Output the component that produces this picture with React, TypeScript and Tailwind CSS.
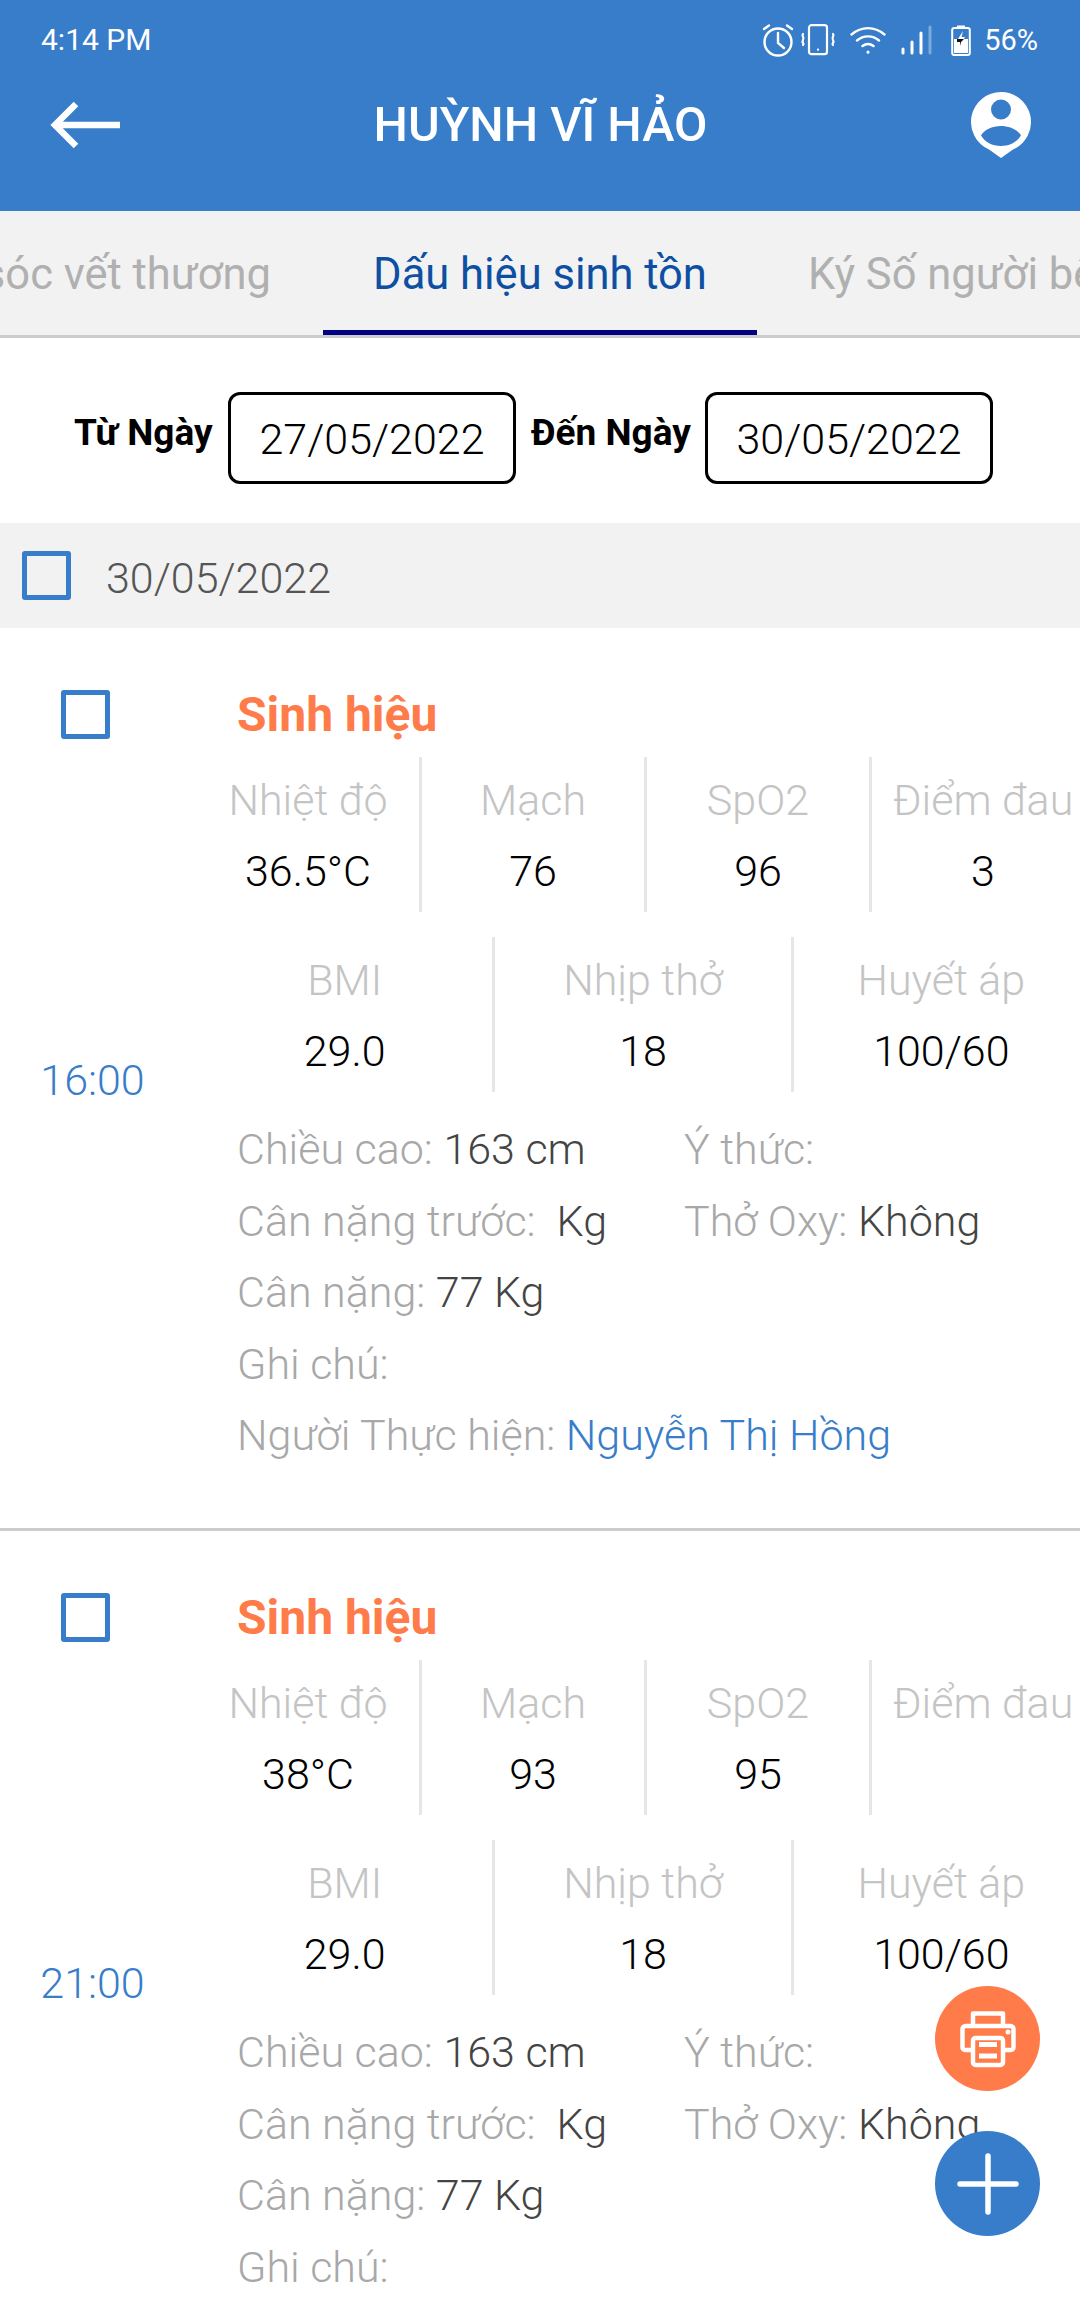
import React from 'react';

const Checkbox = () => <div className="w-[49px] h-[49px] rounded-[3px] border-[5px] border-[#377dc9] shrink-0" />;

const Stat = ({ label, value, last }: { label: string; value: string; last?: boolean }) => (
  <div className={`flex-1 h-[155px] flex flex-col items-center pt-[19px] ${last ? '' : 'border-r-[3px] border-[#e6e6e6]'}`}>
    <div className="text-[43px] leading-[48px] font-light text-[#c4c4c4] whitespace-nowrap">{label}</div>
    <div className="mt-[23px] text-[43px] leading-[48px] font-light text-black whitespace-nowrap">{value}</div>
  </div>
);

const Info = ({ label, value, blue }: { label: string; value?: string; blue?: boolean }) => (
  <div className="h-[71.5px] text-[43px] leading-[71px] font-light text-[#a8a8a8] whitespace-pre">
    {label} <span className={blue ? 'text-[#377dc9]' : 'text-[#444444]'}>{value}</span>
  </div>
);

const Record = ({ time, temp, pulse, spo2, pain }: { time: string; temp: string; pulse: string; spo2: string; pain: string }) => (
  <div className="h-[903px] shrink-0 border-b-[3px] border-[#cccccc] flex">
    <div className="w-[197px] shrink-0 flex flex-col pt-[62px]">
      <div className="ml-[61px]">
        <Checkbox />
      </div>
      <div className="mt-[317px] w-[185px] text-center text-[43px] leading-[48px] font-light text-[#377dc9]">{time}</div>
    </div>
    <div className="w-[897px] shrink-0">
      <div className="pl-[40px] pt-[60px] h-[129px] text-[48px] leading-[54px] font-bold text-[#ff7b4a]">Sinh hiệu</div>
      <div className="flex">
        <Stat label="Nhiệt độ" value={temp} />
        <Stat label="Mạch" value={pulse} />
        <Stat label="SpO2" value={spo2} />
        <Stat label="Điểm đau" value={pain} last />
      </div>
      <div className="flex mt-[25px] w-[892px]">
        <Stat label="BMI" value="29.0" />
        <Stat label="Nhịp thở" value="18" />
        <Stat label="Huyết áp" value="100/60" last />
      </div>
      <div className="flex pl-[40px] mt-[22px]">
        <div className="w-[447px]">
          <Info label="Chiều cao:" value="163 cm" />
          <Info label="Cân nặng trước:" value={' Kg'} />
        </div>
        <div>
          <Info label="Ý thức:" />
          <Info label="Thở Oxy:" value="Không" />
        </div>
      </div>
      <div className="pl-[40px]">
        <Info label="Cân nặng:" value="77 Kg" />
        <Info label="Ghi chú:" />
        <Info label="Người Thực hiện:" value="Nguyễn Thị Hồng" blue />
      </div>
    </div>
  </div>
);

const StatusIcons = () => (
  <div className="flex items-center text-white">
    <svg width="32" height="34" viewBox="0 0 32 34" fill="none" stroke="currentColor" strokeWidth="2.4" strokeLinecap="round" className="mr-[6px]">
      <circle cx="16" cy="19" r="13.5" />
      <path d="M16 10v10l6 5M2 6l5-3.5M30 6l-5-3.5" />
    </svg>
    <svg width="36" height="32" viewBox="0 0 36 32" fill="none" stroke="currentColor" strokeWidth="2.2" strokeLinecap="round" className="mr-[14px]">
      <rect x="9" y="1.2" width="18" height="29" rx="2.5" />
      <path d="M18 25.5v.2M3 10c-2 2 2 3 0 6s2 3 0 5M33 10c2 2-2 3 0 6s-2 3 0 5" />
    </svg>
    <svg width="36" height="28" viewBox="0 0 36 28" fill="none" stroke="currentColor" strokeWidth="2.4" strokeLinecap="round" className="mr-[15px]">
      <path d="M1.5 8.5c10-8.5 23-8.5 33 0M7 14.5c6.500-5.500 15.500-5.500 22 0M12.500 20c3.300-2.500 7.700-2.500 11 0" />
      <path d="M18 26v.2" strokeWidth="3" />
    </svg>
    <svg width="31" height="30" viewBox="0 0 31 30" fill="none" strokeWidth="3" strokeLinecap="round" className="mr-[19px]">
      <path d="M2 28v-4M11 28v-11M20 28V8" stroke="#ffffff" />
      <path d="M29 28V2" stroke="#ffffff" strokeOpacity="0.35" />
    </svg>
    <svg width="20" height="31" viewBox="0 0 20 31" className="mr-[13px]">
      <rect x="1.200" y="3" width="17.600" height="27" rx="2" fill="none" stroke="#ffffff" strokeWidth="2" />
      <rect x="6" y="0.500" width="8" height="2.500" fill="#ffffff" />
      <rect x="3" y="14" width="14" height="14" fill="#ffffff" />
      <path d="M12 6l-5 8h3.500l-1.500 6 5-8h-3.500z" fill="#ffffff" />
      <path d="M6 14h7l-3 3v4l-1-4H6z" fill="#111111" />
    </svg>
    <span className="text-[29px] leading-[34px] text-white">56%</span>
  </div>
);

export default function App() {
  return (
    <div className="relative w-[1080px] h-[2301px] overflow-hidden bg-white flex flex-col font-['Roboto',sans-serif]">
      <header className="h-[211px] shrink-0 bg-[#377dc9]">
        <div className="h-[78px] flex items-center justify-between pl-[41px] pr-[42px] pt-[2px]">
          <span className="text-[30px] leading-[34px] font-normal text-white">4:14 PM</span>
          <StatusIcons />
        </div>
        <div className="h-[94px] flex items-center pl-[49px] pr-[48px]">
          <div className="w-[72px] shrink-0">
            <svg width="72" height="48" viewBox="0 0 72 48" fill="none" stroke="#ffffff" strokeWidth="6.500">
              <path d="M71 24H6M27 3L6 24l21 21" />
            </svg>
          </div>
          <div className="flex-1 text-center text-[48.500px] leading-[54px] font-medium text-white whitespace-nowrap">HUỲNH VĨ HẢO</div>
          <div className="w-[72px] shrink-0 flex justify-end">
            <svg width="62" height="68" viewBox="0 0 62 68" fill="#ffffff">
              <path fillRule="evenodd" d="M31 1a30 30 0 0 1 12 57.500L31 67 19 58.500A30 30 0 0 1 31 1zM31 8.500a10 10 0 1 0 0 20 10 10 0 0 0 0-20zM31 35c-9 0-17 4-20 9.500C15 51 22 55 31 55s16-4 20-10.500C48 39 40 35 31 35z" />
            </svg>
          </div>
        </div>
      </header>

      <nav className="h-[127px] shrink-0 bg-[#f2f2f2] border-b-[3px] border-[#cccccc] relative overflow-hidden">
        <div className="flex absolute left-[-188px] top-0 h-[124px] w-[1500px] text-[43.500px] font-normal">
          <div className="w-[511px] h-full text-right pr-[52px] pt-[39px] leading-[50px] text-[#b0b0b0] whitespace-nowrap">Chăm sóc vết thương</div>
          <div className="w-[434px] h-full border-b-[5px] border-[#000080] text-center pt-[39px] leading-[50px] text-[#0d4fa3] whitespace-nowrap">Dấu hiệu sinh tồn</div>
          <div className="pl-[51px] pt-[39px] leading-[50px] text-[#b0b0b0] whitespace-nowrap">Ký Số người bệnh</div>
        </div>
      </nav>

      <div className="h-[185px] shrink-0 flex items-center pl-[74px] pt-[14px]">
        <div className="text-[37px] leading-[44px] font-bold text-black mb-[9px] w-[154px] whitespace-nowrap">Từ Ngày</div>
        <div className="w-[288px] h-[92px] pt-[3px] rounded-[12px] border-[3px] border-black flex items-center justify-center text-[43px] font-light text-black">27/05/2022</div>
        <div className="text-[37px] leading-[44px] font-bold text-black mb-[9px] ml-[15px] w-[174px] whitespace-nowrap">Đến Ngày</div>
        <div className="w-[288px] h-[92px] pt-[3px] rounded-[12px] border-[3px] border-black flex items-center justify-center text-[43px] font-light text-black">30/05/2022</div>
      </div>

      <div className="h-[105px] shrink-0 bg-[#f2f2f2] flex items-center pl-[22px]">
        <Checkbox />
        <div className="ml-[35px] pt-[4px] text-[43px] leading-[48px] font-light text-[#555555]">30/05/2022</div>
      </div>

      <Record time="16:00" temp="36.5°C" pulse="76" spo2="96" pain="3" />
      <Record time="21:00" temp="38°C" pulse="93" spo2="95" pain="" />

      <div className="absolute left-[935px] top-[1986px] w-[105px] h-[105px] rounded-full bg-[#ff7b4a] flex items-center justify-center">
        <svg width="58" height="58" viewBox="0 0 58 58" fill="none" stroke="#ffffff" strokeWidth="4.500" strokeLinejoin="round">
          <path d="M14 16V3.500h30V16" />
          <path d="M14 40H6a2.500 2.500 0 0 1-2.500-2.500V19A3 3 0 0 1 6.500 16h45a3 3 0 0 1 3 3v18.500A2.500 2.500 0 0 1 52 40h-8" />
          <rect x="14" y="28" width="30" height="27" rx="2.500" />
          <path d="M20 34.500h18M20 46h18" strokeWidth="5" />
          <circle cx="49" cy="22" r="2.500" fill="#ffffff" stroke="none" />
        </svg>
      </div>
      <div className="absolute left-[935px] top-[2131px] w-[105px] h-[105px] rounded-full bg-[#377dc9] flex items-center justify-center">
        <svg width="62" height="62" viewBox="0 0 62 62" fill="none" stroke="#ffffff" strokeWidth="5.500" strokeLinecap="round">
          <path d="M31 3v56M3 31h56" />
        </svg>
      </div>
    </div>
  );
}
